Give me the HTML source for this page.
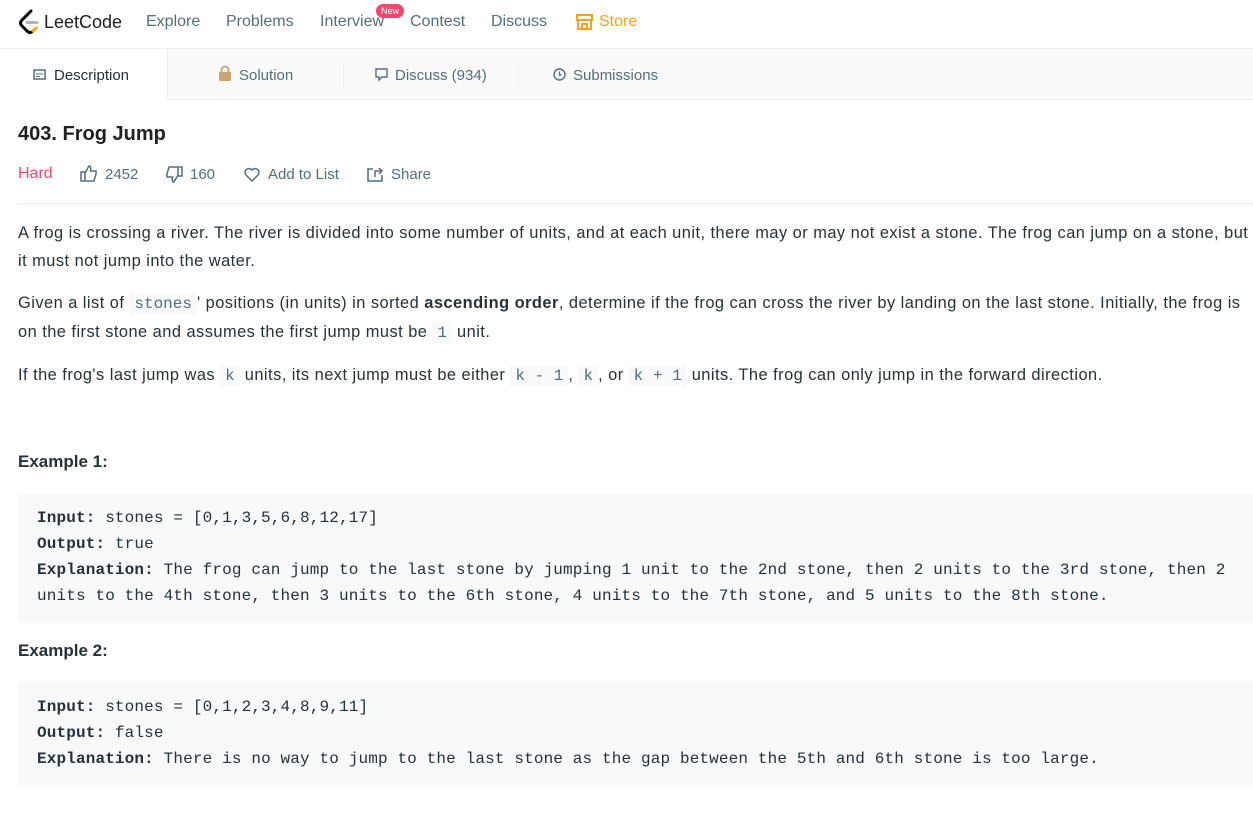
<!DOCTYPE html>
<html><head><meta charset="utf-8"><style>
*{box-sizing:border-box;margin:0;padding:0}
body{width:1253px;height:840px;overflow:hidden;background:#fff;font-family:"Liberation Sans",Arial,sans-serif;color:#263238}
.nav{height:49px;border-bottom:1px solid #eee;position:relative}
.nav span{position:absolute;top:13px;font-size:16px;color:#546e7a}
.logo{position:absolute;left:18px;top:9px}
.new{position:absolute;left:376px;top:4px;background:#ef4770;color:#fff;font-size:9px;border-radius:8px;padding:2px 5px}
.tabs{height:51px;background:#fafafa;border-bottom:1px solid #eee;position:relative}
.tab{position:absolute;top:18px;font-size:15px;color:#546e7a}
.active{position:absolute;left:0;top:0;width:168px;height:51px;background:#fff;border-right:1px solid #eee}
.sep{position:absolute;top:15px;width:1px;height:22px;background:#eee}
h1{position:absolute;left:18px;top:123px;font-size:20px;font-weight:bold;color:#212121}
.meta span{position:absolute;top:166px;font-size:15px;color:#546e7a}
.hr{position:absolute;left:18px;top:203px;width:1235px;height:1px;background:#eee}
.p{position:absolute;left:18px;font-size:16.4px;line-height:28px;white-space:nowrap;color:#263238;letter-spacing:0.47px}
code{font-family:"Liberation Mono",monospace;background:#f7f9fa;color:#546e7a;padding:2px 5px;border-radius:3px;font-size:16px;letter-spacing:0}
h3{position:absolute;left:18px;font-size:17px;font-weight:bold;color:#263238}
pre{position:absolute;left:18px;width:1235px;background:#f7f9fa;font-family:"Liberation Mono",monospace;font-size:16px;letter-spacing:0.14px;line-height:26px;padding:12px 19px 10px;color:#263238;white-space:pre}
</style></head><body>
<div class="nav">
<svg class="logo" width="22" height="26" viewBox="0 0 22 26"><path d="M13 2 L4 11 Q1 14 4 17 L9 22 Q12 25 15 22" fill="none" stroke="#000" stroke-width="3" stroke-linecap="round"/><path d="M9 13.5 H19" stroke="#b3b3b3" stroke-width="3" stroke-linecap="round"/><path d="M15 22 L18 19" stroke="#ffa116" stroke-width="3" stroke-linecap="round"/></svg>
<span style="left:44px;color:#212121;font-size:18px;top:12px">LeetCode</span>
<span style="left:146px">Explore</span>
<span style="left:226px">Problems</span>
<span style="left:320px">Interview</span>
<div class="new">New</div>
<span style="left:410px">Contest</span>
<span style="left:491px">Discuss</span>
<svg style="position:absolute;left:576px;top:14px" width="17" height="16" viewBox="0 0 17 16"><path d="M1 1h15v5H1zM2 6v9h13V6M6 15v-5h5v5" fill="none" stroke="#ffa116" stroke-width="2"/></svg>
<span style="left:599px;color:#ffa116">Store</span>
</div>
<div class="tabs">
<div class="active"></div>
<svg style="position:absolute;left:33px;top:20px" width="13" height="11"><rect x="1" y="1" width="11" height="9" fill="none" stroke="#546e7a" stroke-width="1.5"/><path d="M3 5h7M3 7.5h4" stroke="#546e7a"/></svg>
<span class="tab" style="left:54px;color:#263238">Description</span>
<svg style="position:absolute;left:218px;top:16px" width="14" height="16"><path d="M3.5 7V5a3.5 3.5 0 017 0v2" fill="none" stroke="#c8a46e" stroke-width="1.8"/><rect x="1" y="7" width="12" height="9" rx="1" fill="#c8a46e"/></svg>
<span class="tab" style="left:239px">Solution</span>
<div class="sep" style="left:343px"></div>
<svg style="position:absolute;left:375px;top:19px" width="13" height="13"><path d="M1 1h11v8H7l-3 3V9H1z" fill="none" stroke="#546e7a" stroke-width="1.4"/></svg>
<span class="tab" style="left:395px">Discuss (934)</span>
<div class="sep" style="left:518px"></div>
<svg style="position:absolute;left:553px;top:19px" width="13" height="13"><circle cx="6.5" cy="6.5" r="5.5" fill="none" stroke="#546e7a" stroke-width="1.4"/><path d="M6.5 3.5v3.5h2" fill="none" stroke="#546e7a" stroke-width="1.4"/></svg>
<span class="tab" style="left:573px">Submissions</span>
</div>
<h1>403. Frog Jump</h1>
<div class="meta">
<span style="left:18px;top:165px;color:#ef4770;font-size:16px">Hard</span>
<svg style="position:absolute;left:80px;top:165px" width="18" height="17" viewBox="0 0 18 17"><path d="M1 7h4v9H1zM5 8l4-7c2 0 2 2 1.5 5H16v3l-2 7H5" fill="none" stroke="#546e7a" stroke-width="1.5"/></svg>
<span style="left:105px">2452</span>
<svg style="position:absolute;left:165px;top:166px" width="18" height="17" viewBox="0 0 18 17"><path d="M17 10h-4V1h4zM13 9l-4 7c-2 0-2-2-1.5-5H2V8l2-7h9" fill="none" stroke="#546e7a" stroke-width="1.5"/></svg>
<span style="left:190px">160</span>
<svg style="position:absolute;left:244px;top:167px" width="16" height="15" viewBox="0 0 16 15"><path d="M8 14L2 8a3.5 3.5 0 016-5 3.5 3.5 0 016 5z" fill="none" stroke="#546e7a" stroke-width="1.5"/></svg>
<span style="left:268px">Add to List</span>
<svg style="position:absolute;left:367px;top:166px" width="17" height="16" viewBox="0 0 17 16"><path d="M6 3H1v12h14V9M8 11V5h7M12 2l3 3-3 3" fill="none" stroke="#546e7a" stroke-width="1.5"/></svg>
<span style="left:391px">Share</span>
</div>
<div class="hr"></div>
<div class="p" style="top:219px">A frog is crossing a river. The river is divided into some number of units, and at each unit, there may or may not exist a stone. The frog can jump on a stone, but<br>it must not jump into the water.</div>
<div class="p" style="top:289px">Given a list of <code>stones</code>' positions (in units) in sorted <b>ascending order</b>, determine if the frog can cross the river by landing on the last stone. Initially, the frog is<br>on the first stone and assumes the first jump must be <code>1</code> unit.</div>
<div class="p" style="top:361px">If the frog's last jump was <code>k</code> units, its next jump must be either <code>k - 1</code>, <code>k</code>, or <code>k + 1</code> units. The frog can only jump in the forward direction.</div>
<h3 style="top:452px">Example 1:</h3>
<pre style="top:493px;height:129px"><b>Input:</b> stones = [0,1,3,5,6,8,12,17]
<b>Output:</b> true
<b>Explanation:</b> The frog can jump to the last stone by jumping 1 unit to the 2nd stone, then 2 units to the 3rd stone, then 2
units to the 4th stone, then 3 units to the 6th stone, 4 units to the 7th stone, and 5 units to the 8th stone.</pre>
<h3 style="top:641px">Example 2:</h3>
<pre style="top:682px;height:103px"><b>Input:</b> stones = [0,1,2,3,4,8,9,11]
<b>Output:</b> false
<b>Explanation:</b> There is no way to jump to the last stone as the gap between the 5th and 6th stone is too large.</pre>
</body></html>
